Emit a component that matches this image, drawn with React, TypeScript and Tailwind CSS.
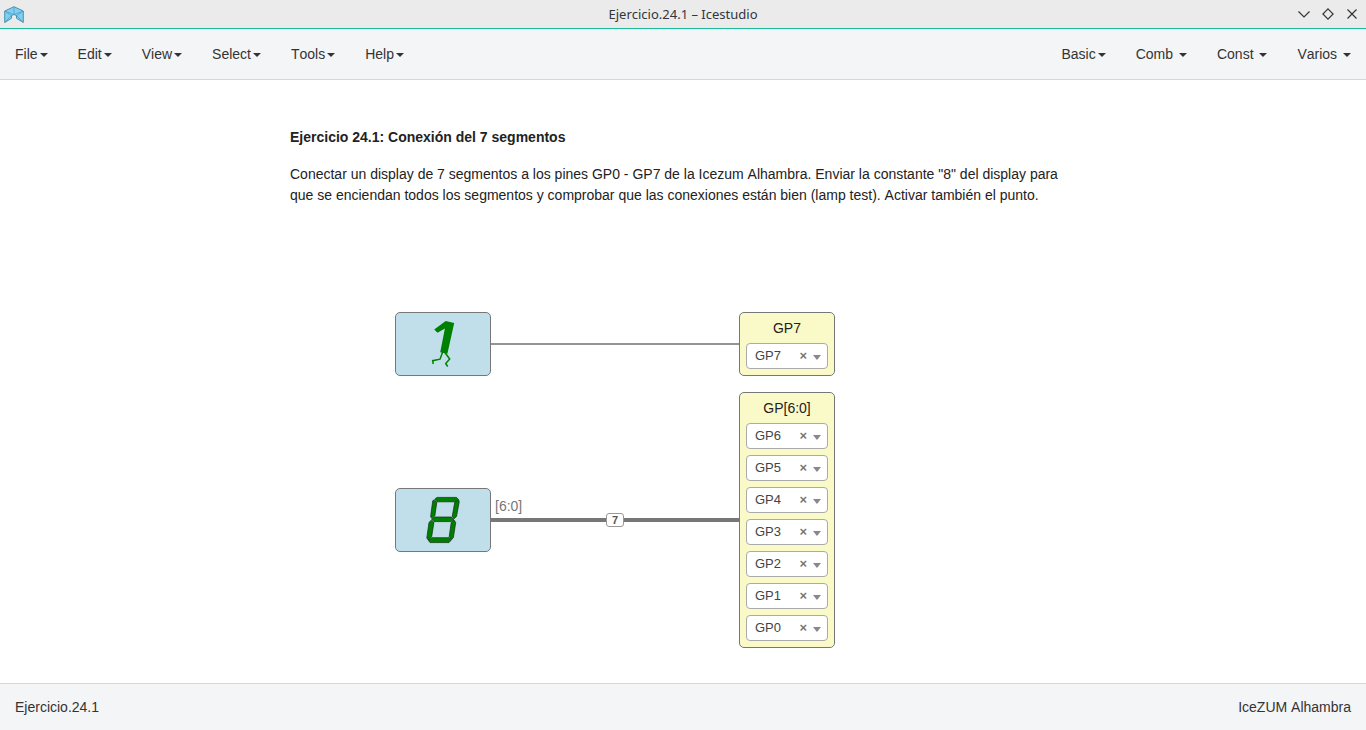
import React from "react";

const leftMenu = ["File", "Edit", "View", "Select", "Tools", "Help"];
const rightMenu = ["Basic", "Comb ", "Const ", "Varios "];

function MenuItem({ label }: { label: string }) {
  return (
    <button className="flex items-center whitespace-pre px-[15px] leading-5">
      {label}
      <svg className="ml-[2px] mt-px h-1 w-2" viewBox="0 0 8 4">
        <path d="M0 0H8L4 4Z" fill="#333" />
      </svg>
    </button>
  );
}

function Logo() {
  return (
    <svg className="h-[18px] w-5" viewBox="0 0 20 18">
      <path
        d="M.7 5 10 .7 19.3 5V16.5L12.5 12.3V9.5L10 8.5 7.5 9.5V12.3L.7 16.5Z"
        fill="#80cff3"
        stroke="#4b8fae"
        strokeWidth="1"
      />
      <path d="M1 5.2 7.5 9.7M19 5.2 12.5 9.7M10 1V8.5M1 5.2 10 8.5 19 5.2M1 16 7.5 9.5M19 16 12.5 9.5" fill="none" stroke="#4b9cc0" strokeWidth=".7" />
    </svg>
  );
}

function PinSelect({ pin }: { pin: string }) {
  return (
    <div className="flex h-[26px] w-[82px] items-center rounded-[4px] border border-[#aaa] bg-white pl-2 text-[13px] text-[#444]">
      <span className="w-[44.5px] leading-6">{pin}</span>
      <span className="w-[13.5px] pb-px text-[13px] font-bold leading-6 text-[#777]">×</span>
      <svg className="mt-[3px] h-[5px] w-2" viewBox="0 0 8 5">
        <path d="M0 0H8L4 5Z" fill="#888" />
      </svg>
    </div>
  );
}

function OutputBlock({ title, pins, className }: { title: string; pins: string[]; className: string }) {
  return (
    <div className={"absolute left-[739px] flex w-24 flex-col items-center rounded-[5px] border border-[#777] bg-[#fafac8] pt-[5px] " + className}>
      <div className="mb-[5px] text-sm leading-5 text-[#222]">{title}</div>
      <div className="flex flex-col gap-[6px]">
        {pins.map((pin) => (
          <PinSelect key={pin} pin={pin} />
        ))}
      </div>
    </div>
  );
}

export default function App() {
  return (
    <div className="flex h-[730px] w-[1366px] flex-col overflow-hidden bg-white font-['Liberation_Sans',sans-serif] text-sm text-[#333] [font-kerning:none]">
      <header className="grid h-[29px] shrink-0 grid-cols-[1fr_auto_1fr] items-center border-b border-[#1abc9c] bg-[#ebebeb]">
        <div className="pl-1 pt-px">
          <Logo />
        </div>
        <h1 className="font-['Noto_Sans',sans-serif] text-[13px] leading-5 text-[#31363b]">Ejercicio.24.1 – Icestudio</h1>
        <div className="flex justify-end gap-3 pr-2">
          <svg className="h-3 w-3" viewBox="0 0 12 12" fill="none" stroke="#31363b" strokeWidth="1.2">
            <path d="M.5 3.5 6 9 11.5 3.5" />
          </svg>
          <svg className="h-3 w-3" viewBox="0 0 12 12" fill="none" stroke="#31363b" strokeWidth="1.2">
            <path d="M6 .9 11.1 6 6 11.1 .9 6Z" />
          </svg>
          <svg className="h-3 w-3" viewBox="0 0 12 12" fill="none" stroke="#31363b" strokeWidth="1.2">
            <path d="M1.5 1.5 10.5 10.5M10.5 1.5 1.5 10.5" />
          </svg>
        </div>
      </header>

      <nav className="flex h-[51px] shrink-0 justify-between border-b border-[#d5d7da] bg-[#f4f5f7]">
        <div className="flex items-center">
          {leftMenu.map((label) => (
            <MenuItem key={label} label={label} />
          ))}
        </div>
        <div className="flex items-center">
          {rightMenu.map((label) => (
            <MenuItem key={label} label={label} />
          ))}
        </div>
      </nav>

      <main className="relative min-h-0 flex-1">
        <article className="absolute left-[290px] top-[47px] w-[790px] text-[#222]">
          <h2 className="mb-4 font-bold leading-[21px]">Ejercicio 24.1: Conexión del 7 segmentos</h2>
          <p className="leading-[21px]">
            Conectar un display de 7 segmentos a los pines GP0 - GP7 de la Icezum Alhambra. Enviar la constante "8" del display para
            <br />
            que se enciendan todos los segmentos y comprobar que las conexiones están bien (lamp test). Activar también el punto.
          </p>
        </article>

        <div className="absolute left-[490px] top-[263px] h-[2px] w-[250px] bg-[#949494]" />
        <div className="absolute left-[490px] top-[438px] h-1 w-[250px] bg-[#777]" />
        <div className="absolute left-[495px] top-[416px] leading-5 text-[#777]">[6:0]</div>
        <div className="absolute left-[606px] top-[433px] flex h-[14px] w-[18px] items-center justify-center rounded-[3px] border-[1.5px] border-[#999] bg-white text-[11px] font-bold leading-none text-[#555]">
          7
        </div>

        <div className="absolute left-[395px] top-[232px] h-16 w-24 rounded-[5px] border border-[#777] bg-[#c0dfeb]">
          <svg className="h-[62px] w-[94px]" viewBox="396 313 94 62">
            <path d="M434.2 329.4 445.7 320.9 454.2 323 447.4 353.8 440.2 352.2 444.9 328.4 437.5 332.8Z" fill="green" />
            <path d="M442.7 352 440 359.2 432.7 360.7 433.3 364M444.5 352 449.7 359 445.7 363.5 447.7 366.5" fill="none" stroke="green" strokeWidth="1.5" />
          </svg>
        </div>

        <div className="absolute left-[395px] top-[408px] h-16 w-24 rounded-[5px] border border-[#777] bg-[#c0dfeb]">
          <svg className="h-[62px] w-[94px]" viewBox="396 489 94 62" fill="green" stroke="#102b10" strokeWidth=".7" strokeLinejoin="round">
            <path d="M434.6 499.3 437 497.4H456.5L458.6 499.5 456 501.8H437Z" />
            <path d="M433.6 500 436.8 502.5 434.8 516 431.8 518.6 430.6 516.5 432.7 501Z" />
            <path d="M458.9 500.2 459.2 502 456.5 516.5 454 518.8 452.3 516 454.7 502.5Z" />
            <path d="M431.8 519.3 435 517H451.5L453.9 519.3 451 521.6H434Z" />
            <path d="M431.3 520.2 433.9 522.4 431.7 536.5 428.2 540 426.8 538 429 522.4Z" />
            <path d="M454.1 520.1 455.7 522.5 453.4 537.5 451.5 539.7 449.2 536.7 451.2 522.6Z" />
            <path d="M428.3 540.3 431.8 537.7H449L451.3 540 449 542.6H430Z" />
          </svg>
        </div>

        <OutputBlock title="GP7" pins={["GP7"]} className="top-[232px] h-16" />
        <OutputBlock title="GP[6:0]" pins={["GP6", "GP5", "GP4", "GP3", "GP2", "GP1", "GP0"]} className="top-[312px] h-64" />
      </main>

      <footer className="flex h-[47px] shrink-0 items-center justify-between border-t border-[#d5d7da] bg-[#f4f5f7] px-[15px]">
        <span>Ejercicio.24.1</span>
        <span>IceZUM Alhambra</span>
      </footer>
    </div>
  );
}
